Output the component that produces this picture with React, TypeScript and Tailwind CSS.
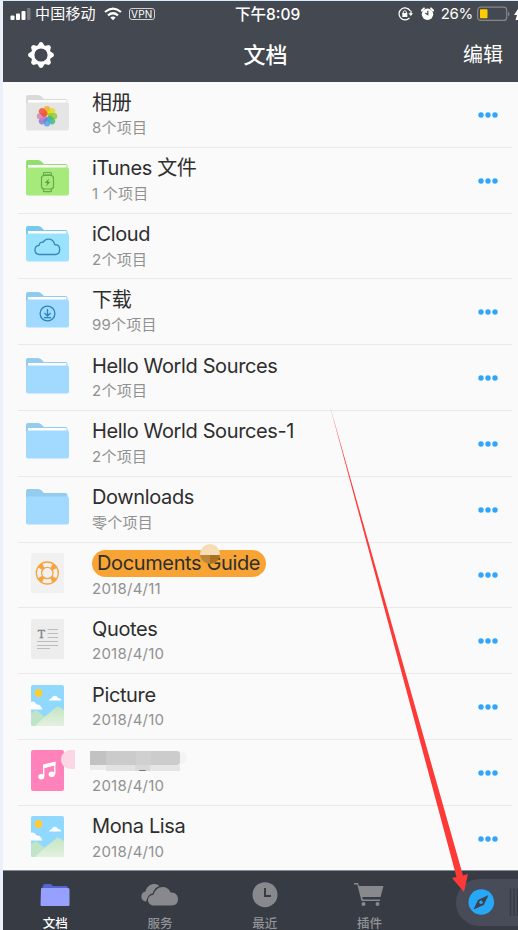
import React from "react";

type Kind =
  | "photos"
  | "itunes"
  | "icloud"
  | "download"
  | "folder"
  | "empty"
  | "guide"
  | "quotes"
  | "picture"
  | "music";

interface Item {
  title: string;
  sub: string;
  kind: Kind;
  noMenu?: boolean;
}

const items: Item[] = [
  { title: "相册", sub: "8个项目", kind: "photos" },
  { title: "iTunes 文件", sub: "1 个项目", kind: "itunes" },
  { title: "iCloud", sub: "2个项目", kind: "icloud", noMenu: true },
  { title: "下载", sub: "99个项目", kind: "download" },
  { title: "Hello World Sources", sub: "2个项目", kind: "folder" },
  { title: "Hello World Sources-1", sub: "2个项目", kind: "folder" },
  { title: "Downloads", sub: "零个项目", kind: "empty" },
  { title: "Documents Guide", sub: "2018/4/11", kind: "guide" },
  { title: "Quotes", sub: "2018/4/10", kind: "quotes" },
  { title: "Picture", sub: "2018/4/10", kind: "picture" },
  { title: "", sub: "2018/4/10", kind: "music" },
  { title: "Mona Lisa", sub: "2018/4/10", kind: "picture" },
];

const PETALS = ["#f8a920", "#dede10", "#8fc832", "#3db87c", "#4aa5ea", "#8577cc", "#d583b8", "#f04a30"];

function Folder({ back, front, empty, children }: { back: string; front: string; empty?: boolean; children?: React.ReactNode }) {
  return (
    <svg width="43" height="36" viewBox="0 0 43 36">
      <path d="M0 14V2Q0 0 2 0H12Q14 0 15.500 1.500L18 4H39.500Q41.500 4 41.500 6V14Z" fill={back} />
      {!empty && <rect x="2" y="5" width="38.500" height="5" fill="#fff" />}
      <rect y="7.500" width="43" height="28" rx="2" fill={front} />
      {children}
    </svg>
  );
}

function Picture() {
  return (
    <svg width="33" height="41" viewBox="0 0 33 41">
      <defs>
        <clipPath id="card"><rect width="33" height="41" rx="2" /></clipPath>
        <linearGradient id="hill" x1="0" y1="0" x2="0" y2="1">
          <stop stopColor="#c3e5c4" />
          <stop offset="1" stopColor="#e3f1df" />
        </linearGradient>
      </defs>
      <g clipPath="url(#card)">
        <rect width="33" height="41" fill="#90d8fe" />
        <circle cx="7.500" cy="8" r="3.900" fill="#fccd38" />
        <path d="M18 15.500Q18 13.500 20.500 13.300Q21.500 10.500 24 10.800Q26.500 11 27 13Q30 13 30.300 15.500Z" fill="#fff" />
        <path d="M-1 17Q3.500 15 5.500 19.500Q9.500 19 11.500 24.500H-1Z" fill="#fff" />
        <path d="M0 28L5 25L14 32L6 41H0Z" fill="#bfe4c8" />
        <path d="M4 41L14 31.500L25.500 22Q27 21 28.500 22L33 25V41Z" fill="url(#hill)" />
      </g>
    </svg>
  );
}

function FileIcon({ kind }: { kind: Kind }) {
  switch (kind) {
    case "photos":
      return (
        <Folder back="#dadada" front="#e5e5e5">
          <g transform="translate(21 21.300)">
            {PETALS.map((c, i) => (
              <rect key={c} x="-3.200" y="-10.200" width="6.400" height="9.400" rx="3.200" fill={c} opacity="0.82" transform={`rotate(${i * 45})`} />
            ))}
          </g>
        </Folder>
      );
    case "itunes":
      return (
        <Folder back="#92df70" front="#a5ea7a">
          <g fill="none" stroke="#67a94b" strokeWidth="1.200">
            <path d="M17.500 15.500V13.300Q17.500 12.500 18.300 12.500H24.500Q25.300 12.500 25.300 13.300V15.500M17.500 28.500V31Q17.500 31.600 18.300 31.600H24.500Q25.300 31.600 25.300 31V28.500M18.500 14.900H24.500" />
            <rect x="15.500" y="15.500" width="12" height="13.500" rx="2.700" />
          </g>
          <path d="M23 18.500L18.700 23H21.200L20 26.500L24.500 21.800H22Z" fill="#5b9f40" />
        </Folder>
      );
    case "icloud":
      return (
        <Folder back="#76c9eb" front="#9be2ff">
          <path d="M13.800 28.500C10.500 28.500 9 26.500 9 24C9 21.500 10.500 19.700 13 19.400C13.200 17 15.200 15.800 17 16.300C18.300 14 20 13.100 22.200 13.100C25.500 13.100 28 15.200 28.600 18.500C31.800 18.600 33.700 20.600 33.700 23.300C33.700 26.200 32 28.500 29 28.500Z" fill="none" stroke="#3989b5" strokeWidth="1.350" />
        </Folder>
      );
    case "download":
      return (
        <Folder back="#8fcaef" front="#a2daff">
          <g fill="none" stroke="#2b84b9" strokeWidth="1.300">
            <circle cx="21.500" cy="21.500" r="7.400" />
            <path d="M21.500 17V23.500M18.500 21L21.500 24L24.500 21M18 25.700H25" />
          </g>
        </Folder>
      );
    case "folder":
      return <Folder back="#94ccee" front="#a2daff" />;
    case "empty":
      return <Folder back="#94ccee" front="#a2daff" empty />;
    case "guide":
      return (
        <svg width="33" height="41" viewBox="0 0 33 41">
          <rect width="33" height="40" rx="1.500" fill="#f1f1f1" />
          <g fill="none" stroke="#f7a43f">
            <circle cx="16.300" cy="20" r="11" strokeWidth="1.300" />
            <circle cx="16.300" cy="20" r="5.700" strokeWidth="1.300" />
            <circle cx="16.300" cy="20" r="8.300" strokeWidth="5" strokeDasharray="4.400 8.638" strokeDashoffset="-4.319" />
          </g>
        </svg>
      );
    case "quotes":
      return (
        <svg width="33" height="41" viewBox="0 0 33 41">
          <rect width="33" height="40" rx="1.500" fill="#ededed" />
          <text x="6.800" y="18.800" fontFamily="Liberation Serif, serif" fontSize="12" fill="#808080" stroke="#808080" strokeWidth="0.300">T</text>
          <path d="M16.500 10.500H27M16.500 14.500H27M16.500 18.500H27M6 22.500H27M6 26.500H27M6 29.500H19" stroke="#bdbdbd" strokeWidth="1" />
        </svg>
      );
    case "music":
      return (
        <svg width="33" height="41" viewBox="0 0 33 41">
          <rect width="33" height="41" rx="2" fill="#ff82bb" />
          <path d="M12.700 26V15.500L23.800 12.500V24M12.700 17.500L23.800 14.500" fill="none" stroke="#fff" strokeWidth="1.300" />
          <path d="M12.100 14.500L24.400 11.700V15L12.100 18Z" fill="#fff" />
          <ellipse cx="10.300" cy="26.700" rx="3" ry="2.700" fill="#fff" />
          <ellipse cx="20.800" cy="24.200" rx="3.100" ry="2.800" fill="#fff" />
        </svg>
      );
    default:
      return <Picture />;
  }
}

const DOCUMENTS: Kind[] = ["guide", "quotes", "picture", "music"];

function Row({ item }: { item: Item }) {
  return (
    <li className="ml-[15px] mr-[6px] flex h-[65.8px] border-b border-[#e9e9eb]">
      <div className={`relative flex w-[58px] shrink-0 justify-center ${DOCUMENTS.includes(item.kind) ? "pt-[10.500px]" : "pt-[12.500px]"}`}>
        <FileIcon kind={item.kind} />
        {item.kind === "music" && <span className="absolute left-[43px] top-[10.5px] h-[19px] w-[14px] rounded-l-full bg-[#fbd7e6]" />}
      </div>
      <div className="ml-4 flex-1 pt-[7.5px]">
        <div className="h-[27px] whitespace-nowrap text-[20px] leading-[27px] tracking-[-0.37px] text-[#2e2e2e]">
          {item.kind === "guide" ? (
            <span className="relative inline-block h-[27px] w-[174px] rounded-full bg-[#f7a434] pl-[5px]">
              {item.title}
              <span className="absolute left-[108px] -top-[6px] flex h-5 w-5 flex-col overflow-hidden rounded-full">
                <span className="h-[11px] bg-[#f5ddb7]" />
                <span className="flex h-[9px]">
                  <span className="flex-1 bg-[#bc8538]" />
                  <span className="flex-1 bg-[#ab7020]" />
                </span>
              </span>
            </span>
          ) : item.kind === "music" ? (
            <span className="-ml-[2px] flex w-[98px] flex-col pt-[3.500px]">
              <span className="flex h-[14px] items-stretch">
                <span className="w-4 bg-[#c2c2c2]" />
                <span className="w-[30px] bg-[#cbcbcb]" />
                <span className="w-[15px] bg-[#d0d0d0]" />
                <span className="w-[29px] rounded-r-[3px] bg-[#cccccc]" />
                <span className="w-[7px] rounded-r-full bg-[#f4f4f4]" />
              </span>
              <span className="flex h-[6px]">
                <span className="h-[5px] w-4 bg-[#ececec]" />
                <span className="w-[29px] bg-[#e2e2e2]" />
                <span className="flex w-[15px] flex-col items-center bg-[#d8d8d8]">
                  <span className="mt-[5px] h-[2px] w-[7px] rounded-b-full bg-[#777]" />
                </span>
                <span className="w-[30px] bg-[#e5e5e5]" />
              </span>
            </span>
          ) : (
            item.title
          )}
        </div>
        <div className="mt-[1.5px] whitespace-nowrap text-[15px] leading-5 tracking-[0.25px] text-[#919191]">{item.sub}</div>
      </div>
      {!item.noMenu && (
        <button className="mr-[14px] flex items-center pt-px">
          <svg width="20" height="6" viewBox="0 0 20 6" fill="#31a4fb">
            <circle cx="3" cy="3" r="2.700" />
            <circle cx="10" cy="3" r="2.700" />
            <circle cx="17" cy="3" r="2.700" />
          </svg>
        </button>
      )}
    </li>
  );
}

function Gear() {
  return (
    <svg width="26" height="26" viewBox="-13 -13 26 26">
      <circle r="8.300" fill="none" stroke="#fff" strokeWidth="3.400" />
      {[0, 45, 90, 135, 180, 225, 270, 315].map((a) => (
        <path key={a} d="M-3.700 -9L-1.500 -12.500Q0 -13.300 1.500 -12.500L3.700 -9Z" fill="#fff" transform={`rotate(${a})`} />
      ))}
    </svg>
  );
}

function StatusBar() {
  return (
    <div className="grid h-[26px] grid-cols-[232px_auto_1fr] items-center text-white">
      <div className="flex items-center pl-[7px]">
        <svg width="21" height="14" viewBox="0 0 21 14" fill="#fff">
          <rect x="0.500" y="8.500" width="4" height="4.500" rx="1" />
          <rect x="6" y="6.500" width="4" height="6.500" rx="1" />
          <rect x="11.500" y="4" width="4" height="9" rx="1" />
          <rect x="17" y="1" width="3.500" height="12" rx="1" fill="#777a82" />
        </svg>
        <span className="ml-1 text-[15px] leading-5 tracking-[0.2px]">中国移动</span>
        <svg className="ml-2" width="18" height="14" viewBox="0 0 18 14">
          <g fill="none" stroke="#fff" strokeWidth="2.200">
            <path d="M1 5Q9 -1.800 17 5" />
            <path d="M4 8.300Q9 4.200 14 8.300" />
          </g>
          <path d="M6.300 10.600Q9 8.400 11.700 10.600L9 13.300Z" fill="#fff" />
        </svg>
        <span className="ml-[7px] flex h-3 w-[26px] items-center justify-center rounded-[3px] border border-[#d0d1d3] text-[10px] leading-none tracking-[0.300px]">VPN</span>
      </div>
      <div className="pt-px text-[15.500px] font-medium">下午8:09</div>
      <div className="flex items-center justify-end">
        <svg width="15" height="14" viewBox="0 0 15 14">
          <path d="M12.300 4A6 6 0 1 0 11.500 11M13 3.800V7" fill="none" stroke="#fff" strokeWidth="1.200" />
          <path d="M10.500 6.300H15L12.800 9Z" fill="#fff" />
          <rect x="4.300" y="6" width="5" height="4" fill="#fff" />
          <path d="M5.200 6.500V4.800Q6.800 2.200 8.400 4.800V6.500" fill="none" stroke="#fff" />
        </svg>
        <svg className="ml-[8px]" width="13" height="14" viewBox="0 0 13 14">
          <circle cx="6.500" cy="7.300" r="5.700" fill="#fff" />
          <path d="M.8 3.500L3 1.300M12.200 3.500L10 1.300" stroke="#fff" strokeWidth="1.800" strokeLinecap="round" />
          <path d="M6.800 3.800V7.700L4.300 6" fill="none" stroke="#444850" strokeWidth="1.200" />
        </svg>
        <span className="ml-[7px] text-[15px] leading-5 tracking-[-0.3px]">26%</span>
        <svg className="ml-1" width="41" height="16" viewBox="0 0 41 16">
          <rect x="0.700" y="1.200" width="29" height="13.200" rx="3" fill="none" stroke="#85878d" strokeWidth="1.200" />
          <path d="M31 5.500Q34 8 31 10.500Z" fill="#85878d" />
          <rect x="3" y="3.300" width="7.500" height="9" rx="0.700" fill="#fecb00" />
          <path d="M41 3L37 9H40L38.500 14H41Z" fill="#fff" />
        </svg>
      </div>
    </div>
  );
}

function Tab({ label, active, children }: { label: string; active?: boolean; children: React.ReactNode }) {
  return (
    <div className={`flex w-[104.7px] flex-col items-center pt-[10px] ${active ? "text-white" : ""}`}>
      <div className="flex h-[27px] shrink-0 items-center">{children}</div>
      <span className="mt-[7px] shrink-0">{label}</span>
    </div>
  );
}

function TabBar() {
  return (
    <nav className="flex h-[60px] shrink-0 overflow-hidden border-t border-[#858b90] bg-[#373b44] text-[12.500px] font-medium leading-[18px] text-[#929397]">
      <Tab label="文档" active>
        <svg width="30" height="24" viewBox="0 0 30 24">
          <path d="M1 10L3 2.500Q3.500 1 5 1H10Q12 1 13 3H26Q28 3 28 5V8H1Z" fill="#5664d2" />
          <path d="M1 6Q1 5 2 5H28Q29.500 5 29.500 6.500V22Q29.500 23 28.500 23H1.500Q.5 23 .5 22Z" fill="#979fff" />
        </svg>
      </Tab>
      <Tab label="服务">
        <svg width="38" height="24" viewBox="0 0 38 24" fill="#88898c">
          <path d="M5 18.500C1.500 18 0 15.500 .5 12.500C.8 10 2.500 8.800 4.500 8.500C5.500 3.500 9.500 1 13.500 1Q16.500 1 18.500 3Q13.500 4.500 11.800 10.300Q7 11.500 5.700 17Z" />
          <path d="M13 22.500C9 22.500 7 19.800 7 17C7 14 9 12 12.500 11.700C14 7 17.500 4 21.500 4Q27.500 4 29.500 9.500C34 9 37 12 37 16Q37 22.500 30.500 22.500Z" />
        </svg>
      </Tab>
      <Tab label="最近">
        <svg width="26" height="26" viewBox="0 0 26 26">
          <circle cx="13" cy="12.700" r="12.500" fill="#88898c" />
          <path d="M13 6V14H19" fill="none" stroke="#373b44" strokeWidth="2" />
        </svg>
      </Tab>
      <Tab label="插件">
        <svg width="30" height="25" viewBox="0 0 30 25" fill="#88898c">
          <path d="M0 1H4L5 4H29.500L26.500 15H8.300L9 17.500H26V19H7.500L3.300 2.500H0Z" />
          <circle cx="9.500" cy="22" r="2" />
          <circle cx="23.500" cy="22" r="2" />
        </svg>
      </Tab>
      <div className="ml-auto mt-2 flex h-[47px] w-[62px] items-start rounded-l-full bg-[#474c58] pl-3 pt-2">
        <svg width="50" height="30" viewBox="0 0 50 30">
          <circle cx="13.300" cy="15" r="12.800" fill="#27a8f7" />
          <path d="M20.500 8L15.800 18L5.500 22.500L10 13Z" fill="#3b4350" />
          <circle cx="13" cy="15.300" r="1.700" fill="#27a8f7" />
          <path d="M42.500 1.500V29M46 1.500V29M49.500 1.500V29" stroke="#343943" strokeWidth="1.300" />
        </svg>
      </div>
    </nav>
  );
}

export default function App() {
  return (
    <div className="relative flex h-[930px] w-[518px] flex-col overflow-hidden border-l-[3px] border-t border-l-[#eaf1fb] border-t-[#d5eafa] bg-[#fafafa] font-['Inter','Noto_Sans_CJK_SC',sans-serif]">
      <header className="h-[81px] shrink-0 bg-[#444850] text-white">
        <StatusBar />
        <div className="grid h-[55px] grid-cols-[1fr_auto_1fr] items-center pl-[25px] pr-[15px]">
          <Gear />
          <h1 className="text-[22px] font-medium leading-[30px]">文档</h1>
          <button className="text-right text-[20px]">编辑</button>
        </div>
      </header>
      <ul className="h-[788px] shrink-0 overflow-hidden">
        {items.map((item, i) => (
          <Row key={i} item={item} />
        ))}
      </ul>
      <TabBar />
      <svg className="pointer-events-none absolute -top-px -left-[3px]" width="518" height="930" viewBox="0 0 518 930">
        <path d="M329.500 404.500L463 875.500L468 874L464 892L452 878L456.500 877Z" fill="#fd3a38" />
      </svg>
    </div>
  );
}
